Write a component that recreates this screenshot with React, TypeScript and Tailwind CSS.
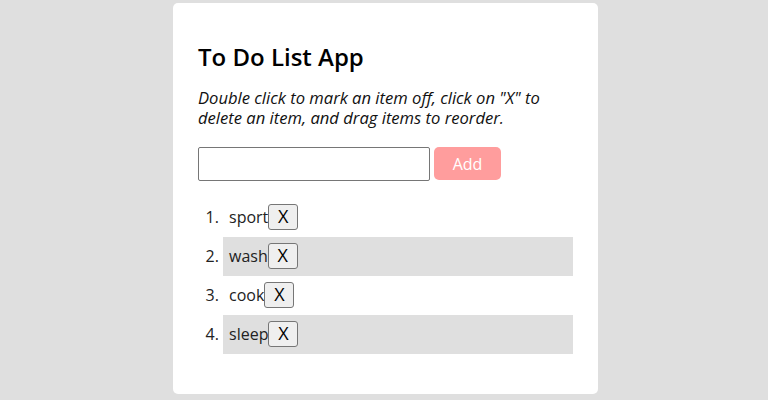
import React from "react";

const items = ["sport", "wash", "cook", "sleep"];

export default function App() {
  return (
    <div className="min-h-[400px] w-full bg-[#dfdfdf] flex justify-center pl-[3px] pt-[3px] pb-[6px]" style={{ fontFamily: '"Open Sans", sans-serif' }}>
      <div className="w-[425px] bg-white rounded-[5px] p-[25px] pb-[40px]">
        <h1 className="text-[24px] leading-[36px] mt-[11px] font-semibold text-black">To Do List App</h1>
        <p className="italic text-[16.6px] leading-[20px] mt-[13px] text-[#111]">
          Double click to mark an item off, click on "X" to delete an item, and drag items to reorder.
        </p>
        <div className="flex items-start gap-[4px] mt-[19px]">
          <input className="w-[232px] h-[34px] border border-[#767676] rounded-[2px] px-2 outline-none" />
          <button className="w-[67px] h-[33px] bg-[#ff9d9d] text-white text-[16px] rounded-[5px]">Add</button>
        </div>
        <ol className="list-decimal pl-[25px] mt-[17px] text-[16px] text-[#222]">
          {items.map((it, i) => (
            <li key={it} className={`h-[39px] pl-[6px] ${i % 2 === 1 ? "bg-[#dfdfdf]" : ""}`}>
              <div className="flex items-start h-[39px] pt-[6px]">
                <span className="leading-[24px] mt-[1px]">{it}</span>
                <button className="h-[26px] w-[30px] pb-[2px] bg-[#efefef] border border-[#767676] rounded-[3px] text-[18px] leading-[22px] text-black">X</button>
              </div>
            </li>
          ))}
        </ol>
      </div>
    </div>
  );
}
